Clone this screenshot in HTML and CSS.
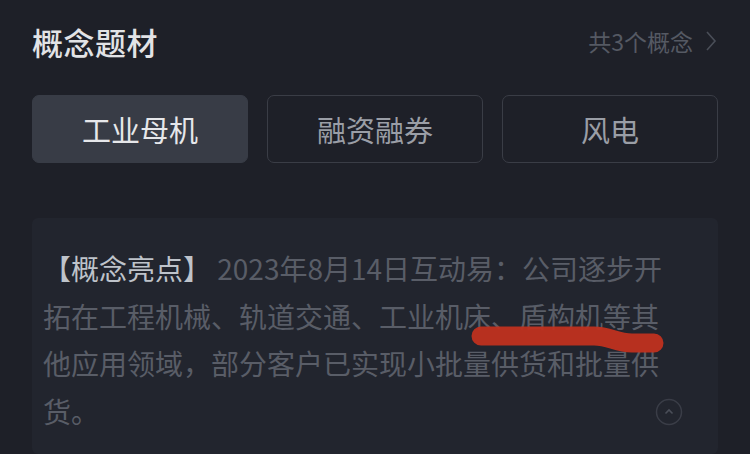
FILE: index.html
```html
<!DOCTYPE html>
<html lang="zh-CN">
<head>
  <meta charset="UTF-8" />
  <meta name="viewport" content="width=device-width, initial-scale=1.0"/>
  <title>概念题材</title>
  <link rel="stylesheet" href="styles.css">
</head>
<body>
  <div class="page">
    <div class="head">
      <h2>概念题材</h2>
      <a class="more">共3个概念
        <svg class="chev" width="12" height="22" viewBox="0 0 12 22"><path d="M2 2 L10 11 L2 20" fill="none" stroke="#4a4e58" stroke-width="1.6"/></svg>
      </a>
    </div>

    <div class="tags">
      <div class="tag active">工业母机</div>
      <div class="tag">融资融券</div>
      <div class="tag">风电</div>
    </div>

    <div class="card">
      <p class="desc"><span class="hl">【概念亮点】</span> 2023年8月14日互动易：公司逐步开拓在工程机械、轨道交通、工业机床、盾构机等其他应用领域，部分客户已实现小批量供货和批量供货。</p>
      <svg class="toggle" width="28" height="28" viewBox="0 0 28 28">
        <circle cx="14" cy="14" r="12.5" fill="none" stroke="#3a3d47" stroke-width="1.5"/>
        <path d="M10.5 15.5 L14 12 L17.5 15.5" fill="none" stroke="#4a4e58" stroke-width="1.6"/>
      </svg>
      <!-- hand-drawn mark from the screenshot -->
      <svg class="mark" width="686" height="160" viewBox="0 0 686 160">
        <path d="M449 118 L562 118 C578 118 584 125 600 125 L622 125" fill="none" stroke="#c0301f" stroke-width="19" stroke-linecap="round" opacity="0.95"/>
      </svg>
    </div>
  </div>
</body>
</html>
```

FILE: styles.css
```css
body {
  margin: 0;
  height: 454px;
  background: #1e2028;
  font-family: "Noto Sans CJK SC", "Noto Sans", sans-serif;
  color: #e4e5e7;
  overflow: hidden;
}
.page {
  padding: 20px 32px 0;
}
.head {
  display: flex;
  align-items: center;
  justify-content: space-between;
  height: 42px;
}
.head h2 {
  margin: 0;
  font-size: 31px;
  font-weight: 500;
  color: #e2e3e6;
  letter-spacing: 0.5px;
}
.more {
  display: flex;
  align-items: center;
  gap: 12px;
  font-size: 23px;
  color: #555963;
  padding-right: 1px;
}
.tags {
  display: grid;
  grid-template-columns: repeat(3, 1fr);
  gap: 19px;
  margin-top: 33px;
}
.tag {
  height: 66px;
  border: 1px solid #3a3d46;
  border-radius: 7px;
  display: flex;
  align-items: center;
  justify-content: center;
  font-size: 29px;
  color: #9a9ea6;
}
.tag.active {
  background: #383c46;
  border-color: #383c46;
  color: #e6e7ea;
}
.card {
  position: relative;
  margin-top: 55px;
  background: #22252e;
  border-radius: 6px;
  padding: 27px 0 0 11px;
  height: 209px;
}
.desc {
  margin: 0;
  width: 632px;
  font-size: 28px;
  line-height: 47.5px;
  color: #595d67;
}
.hl {
  color: #bec3ca;
}
.toggle {
  position: absolute;
  left: 623px;
  top: 180px;
}
.mark {
  position: absolute;
  left: 0;
  top: 0;
  pointer-events: none;
}
```
